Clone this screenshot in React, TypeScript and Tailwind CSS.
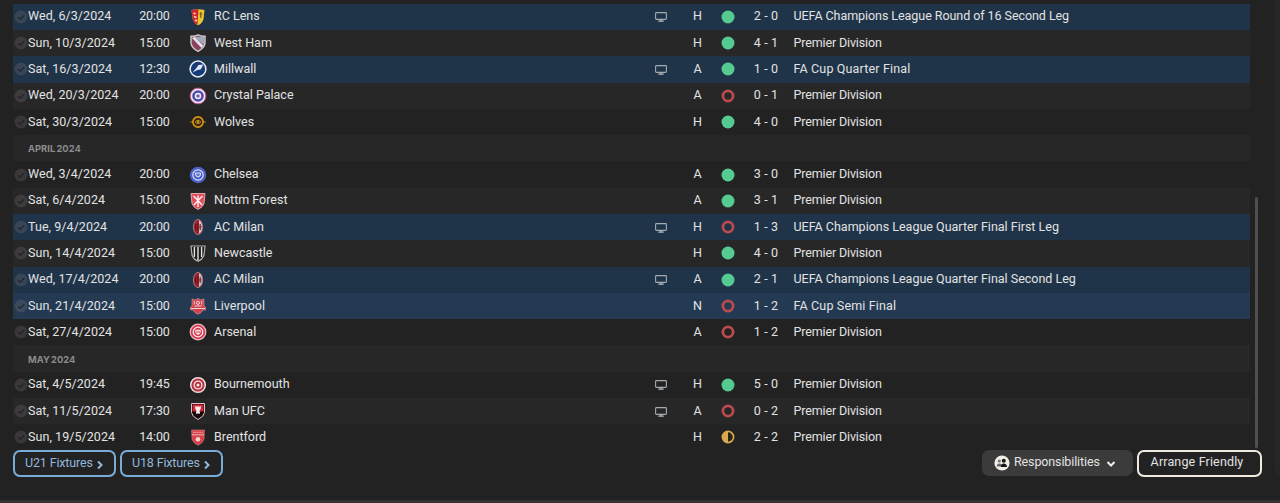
import type { ReactNode } from "react";
import clsx from "clsx";

type Result = "win" | "loss" | "draw";

interface Fixture {
  date: string;
  time: string;
  team: string;
  crest: string;
  tv?: boolean;
  venue: "H" | "A" | "N";
  result: Result;
  score: string;
  competition: string;
  cup?: boolean;
}

interface MonthRow {
  month: string;
}

const PREMIER = "Premier Division";
const UCL = "UEFA Champions League";

const rows: (Fixture | MonthRow)[] = [
  { date: "Wed, 6/3/2024", time: "20:00", team: "RC Lens", crest: "lens", tv: true, venue: "H", result: "win", score: "2 - 0", competition: `${UCL} Round of 16 Second Leg`, cup: true },
  { date: "Sun, 10/3/2024", time: "15:00", team: "West Ham", crest: "westham", venue: "H", result: "win", score: "4 - 1", competition: PREMIER },
  { date: "Sat, 16/3/2024", time: "12:30", team: "Millwall", crest: "millwall", tv: true, venue: "A", result: "win", score: "1 - 0", competition: "FA Cup Quarter Final", cup: true },
  { date: "Wed, 20/3/2024", time: "20:00", team: "Crystal Palace", crest: "palace", venue: "A", result: "loss", score: "0 - 1", competition: PREMIER },
  { date: "Sat, 30/3/2024", time: "15:00", team: "Wolves", crest: "wolves", venue: "H", result: "win", score: "4 - 0", competition: PREMIER },
  { month: "APRIL 2024" },
  { date: "Wed, 3/4/2024", time: "20:00", team: "Chelsea", crest: "chelsea", venue: "A", result: "win", score: "3 - 0", competition: PREMIER },
  { date: "Sat, 6/4/2024", time: "15:00", team: "Nottm Forest", crest: "forest", venue: "A", result: "win", score: "3 - 1", competition: PREMIER },
  { date: "Tue, 9/4/2024", time: "20:00", team: "AC Milan", crest: "milan", tv: true, venue: "H", result: "loss", score: "1 - 3", competition: `${UCL} Quarter Final First Leg`, cup: true },
  { date: "Sun, 14/4/2024", time: "15:00", team: "Newcastle", crest: "newcastle", venue: "H", result: "win", score: "4 - 0", competition: PREMIER },
  { date: "Wed, 17/4/2024", time: "20:00", team: "AC Milan", crest: "milan", tv: true, venue: "A", result: "win", score: "2 - 1", competition: `${UCL} Quarter Final Second Leg`, cup: true },
  { date: "Sun, 21/4/2024", time: "15:00", team: "Liverpool", crest: "liverpool", venue: "N", result: "loss", score: "1 - 2", competition: "FA Cup Semi Final", cup: true },
  { date: "Sat, 27/4/2024", time: "15:00", team: "Arsenal", crest: "arsenal", venue: "A", result: "loss", score: "1 - 2", competition: PREMIER },
  { month: "MAY 2024" },
  { date: "Sat, 4/5/2024", time: "19:45", team: "Bournemouth", crest: "bournemouth", tv: true, venue: "H", result: "win", score: "5 - 0", competition: PREMIER },
  { date: "Sat, 11/5/2024", time: "17:30", team: "Man UFC", crest: "manutd", tv: true, venue: "A", result: "loss", score: "0 - 2", competition: PREMIER },
  { date: "Sun, 19/5/2024", time: "14:00", team: "Brentford", crest: "brentford", venue: "H", result: "draw", score: "2 - 2", competition: PREMIER },
];

const SHIELD = "M2 2.2Q5.5 2.4 9 1Q12.500 2.4 16 2.200V9Q15.500 14 9 17.300Q2.500 14 2 9Z";

const crests: Record<string, ReactNode> = {
  lens: (
    <>
      <path d="M2.500 2Q9 .4 15.500 2L14.500 11Q13.500 15.500 9 17.300Q4.800 15.500 3.700 11Z" fill="#e9c62e" />
      <path d="M2.500 2Q6 1.200 9.500 1.200L8.500 17Q4.800 15.500 3.700 11Z" fill="#cf2530" />
      <path d="M4.500 5l2 1M5 8.500l2.500 1M6 12l2 1" stroke="#f5dfb5" strokeWidth="1.400" />
      <path d="M11.800 4v6M10.400 6h3" stroke="#6b5319" strokeWidth="1.100" />
    </>
  ),
  westham: (
    <>
      <path d={SHIELD} fill="#8c4059" stroke="#c9c5cf" strokeWidth="1.500" />
      <path d="M5 3h10v8z" fill="#a0a9b6" />
      <path d="M3 4l9.500 10 1.800-2.500L5.500 3z" fill="#dfe5ea" />
    </>
  ),
  millwall: (
    <>
      <circle cx="9" cy="9" r="7.900" fill="#173a78" stroke="#e8edf4" strokeWidth="1.500" />
      <path d="M3.500 12.500L7 8.500 9.500 5l4.500-.5-.8 2.500-1.700 2.500-3 .5z" fill="#dfe8f2" />
    </>
  ),
  palace: (
    <>
      <circle cx="9" cy="9" r="7.900" fill="#f0e8f4" stroke="#c04a8a" strokeWidth="1" />
      <circle cx="9" cy="9" r="5.800" fill="#4f4ba6" />
      <circle cx="9" cy="9" r="2.500" fill="#6c64b6" stroke="#f1edf8" strokeWidth="1.500" />
    </>
  ),
  wolves: (
    <>
      <circle cx="9" cy="9" r="7.500" fill="#282010" />
      <path d="M1 9h3M14 9h3" stroke="#a87921" />
      <circle cx="9" cy="9" r="5.100" fill="#38280d" stroke="#d3961e" strokeWidth="1.700" />
      <path d="M6.200 9Q9 5.500 11.800 9Q9 12.500 6.200 9Z" fill="#5d4014" stroke="#c28a20" />
      <circle cx="9" cy="9" r="1" fill="#dda62d" />
    </>
  ),
  chelsea: (
    <>
      <circle cx="9" cy="9" r="8.200" fill="#4c5fc5" />
      <circle cx="9" cy="9" r="5.200" fill="none" stroke="#dce3f8" strokeWidth="1.200" />
      <path d="M6.400 7h5.200l-.6 3Q9 12 7 10z" fill="#6578d2" stroke="#e2e8fb" />
    </>
  ),
  forest: (
    <>
      <path d="M2 1.500h14l-1 10Q14 15 9 17.500Q4 15 3 11.500Z" fill="#df4d5b" stroke="#efc7ca" strokeWidth=".8" />
      <path d="M9 3.500V15M4.500 4L9 8.500 13.500 4M5 13l4-4.500 4 4.500" fill="none" stroke="#fff0ee" strokeWidth="1.400" />
    </>
  ),
  milan: (
    <>
      <ellipse cx="9" cy="9" rx="4.600" ry="7.600" fill="#a41e2a" stroke="#b58a8d" strokeWidth=".8" />
      <path d="M10 2v14Q13.200 14 13.200 9T10 2z" fill="#cfc5c9" />
      <path d="M6.700 6v6.500M9 5v8M11.200 6v6" stroke="#4b151a" strokeWidth="1" />
      <path d="M9.800 9h3" stroke="#b52734" strokeWidth="1.500" />
    </>
  ),
  newcastle: (
    <>
      <path d="M2 2h14l-1 9Q13.500 15.500 9 17.200Q4.500 15.500 3 11Z" fill="#19191a" stroke="#b4b4ae" strokeWidth="1.200" />
      <path d="M5.400 3v10M9 3v13.500M12.600 3v10" stroke="#e7e7df" strokeWidth="1.400" />
    </>
  ),
  liverpool: (
    <>
      <path d="M3 2l3 1 3-1.500L12 3l3-1v7l1.500 1v3H14Q12.500 16 9 17.200Q5.500 16 4 13H1.500v-3L3 9z" fill="#cf4350" stroke="#e39ba0" strokeWidth=".6" />
      <path d="M2 11.500h14M5.500 9h7" stroke="#f3ced0" strokeWidth="1.200" />
      <circle cx="9" cy="5.800" r="1.600" fill="#d64b58" stroke="#f4d7d7" />
      <path d="M5.300 4v3.500M12.700 4v3.500" stroke="#f0c3c5" />
    </>
  ),
  arsenal: (
    <>
      <circle cx="9" cy="9" r="7.800" fill="#d63b50" stroke="#efb9c0" strokeWidth="1.200" />
      <circle cx="9" cy="9" r="4.800" fill="#d63b50" stroke="#f8e9eb" strokeWidth="1.300" />
      <path d="M6.200 6.800h5.600v2Q11.500 11 9 12Q6.500 11 6.200 8.800z" fill="#f4dfe1" />
      <path d="M7 9h4" stroke="#d63b50" />
    </>
  ),
  bournemouth: (
    <>
      <circle cx="9" cy="9" r="7.300" fill="#b92f40" stroke="#f0dfdd" strokeWidth="1.500" />
      <circle cx="9" cy="9" r="3.900" fill="#b92f40" stroke="#f0dfdd" strokeWidth="1.400" />
      <circle cx="9" cy="9" r="1.500" fill="#f7ece6" />
    </>
  ),
  manutd: (
    <>
      <path d="M2.500 1.500h13v9Q15 14.500 9 17.500Q3 14.500 2.500 10.500Z" fill="#15090b" stroke="#e2c0c1" />
      <path d="M3.500 2.500h11v7h-11z" fill="#d4293b" />
      <path d="M6.300 4h1.200v1h1V4h1.200v1h1V4h1v3l-1 1v3.500H7.300V8l-1-1z" fill="#f8eeee" />
      <path d="M4 10l5 4.500 5-4.500" fill="#15090b" />
      <path d="M7 10h4v1.700H7z" fill="#f1dede" />
    </>
  ),
  brentford: (
    <>
      <path d="M2.500 2h13l-.5 9Q14 15 9 17.300Q4 15 3 11Z" fill="#d7404a" stroke="#c98081" strokeWidth=".6" />
      <path d="M3 6.800h12" stroke="#f1b4b0" />
      <path d="M4 4.300h10" stroke="#ee9c9b" strokeWidth="1.300" strokeDasharray="1.200 .6" />
      <circle cx="9" cy="11.200" r="2.300" fill="#f7d6ca" />
    </>
  ),
};

function Crest({ name }: { name: string }) {
  return (
    <svg viewBox="0 0 18 18" className="size-[18px]">
      {crests[name]}
    </svg>
  );
}

function CheckIcon() {
  return (
    <svg viewBox="0 0 14 14" className="ml-[.5px] size-[14px]">
      <circle cx="7" cy="7" r="6.500" fill="#8b8580" fillOpacity=".22" />
      <path d="M4 7.200l2.200 2 4-4" fill="none" stroke="#161b20" strokeOpacity=".65" strokeWidth="1.400" />
    </svg>
  );
}

function TvIcon() {
  return (
    <svg viewBox="0 0 12 10" className="mt-px h-[10px] w-3">
      <rect x=".6" y=".6" width="10.800" height="6.800" rx=".8" fill="none" stroke="#a3aab0" strokeWidth="1.100" />
      <path d="M6 7.500v1.500M3.300 9.200h5.400" stroke="#b5bbc0" strokeWidth="1.300" />
    </svg>
  );
}

function ResultIcon({ result }: { result: Result }) {
  return (
    <svg viewBox="0 0 14 14" className="ml-[.5px] size-[14px]">
      {result === "win" && <circle cx="7" cy="7" r="6.500" fill="#55cb91" />}
      {result === "loss" && <circle cx="7" cy="7" r="5.100" fill="none" stroke="#b94a4e" strokeWidth="2.800" />}
      {result === "draw" && (
        <>
          <circle cx="7" cy="7" r="5.600" fill="#292419" stroke="#dba84b" strokeWidth="1.700" />
          <path d="M7 1.400a5.600 5.600 0 0 0 0 11.200z" fill="#dba84b" />
        </>
      )}
    </svg>
  );
}

function Chevron({ down }: { down?: boolean }) {
  return (
    <svg viewBox="0 0 10 10" className={clsx("mt-[2px] size-[10px]", down && "rotate-90")}>
      <path d="M3 1.500L6.500 5 3 8.500" fill="none" stroke="currentColor" strokeWidth="2" />
    </svg>
  );
}

function FixtureRow({ fixture, odd }: { fixture: Fixture; odd: boolean }) {
  const { competition } = fixture;
  return (
    <div
      className={clsx(
        "grid h-[26.29px] grid-cols-[15px_111px_31px_17px_27px_434px_26px_46px_14px_63px_1fr] items-center whitespace-nowrap",
        fixture.cup ? (odd ? "bg-[#243a52]" : "bg-[#203449]") : odd && "bg-[#272728]"
      )}
    >
      <CheckIcon />
      <span className="tracking-[0.06px]">{fixture.date}</span>
      <span className="text-center tracking-[-0.1px]">{fixture.time}</span>
      <span />
      <span className="pl-[2px]"><Crest name={fixture.crest} /></span>
      <span>{fixture.team}</span>
      <span className="flex justify-center">{fixture.tv && <TvIcon />}</span>
      <span className="pl-px text-center">{fixture.venue}</span>
      <ResultIcon result={fixture.result} />
      <span className="pl-px text-center tracking-[0.2px]">{fixture.score}</span>
      <span
        className={clsx(
          "-ml-[3.5px]",
          competition === PREMIER && "tracking-[-0.14px]",
          competition.startsWith("FA") && "tracking-[0.15px]",
          competition.includes("16") && "tracking-[-0.06px]"
        )}
      >
        {competition}
      </span>
    </div>
  );
}

export default function App() {
  return (
    <div className="flex h-[503px] w-[1280px] flex-col overflow-hidden bg-[#222223] font-[Roboto,sans-serif] text-[12.5px] text-[#e2e2e2]">
      <div className="flex h-[500px] justify-between">
        <div className="flex w-[1262px] flex-col">
          <div className="flex h-[450px]">
            <div className="ml-[13px] w-[1237px] pt-[3.7px]">
              {rows.map((row, i) =>
                "month" in row ? (
                  <div key={row.month} className="flex h-[26.29px] items-center bg-[#272728] pt-[2px] pl-[15px] font-[Inter,sans-serif] text-[9.3px] font-bold tracking-[0.05px] [word-spacing:-1px] text-[#8c8c8c]">
                    {row.month}
                  </div>
                ) : (
                  <FixtureRow key={row.date} fixture={row} odd={i % 2 === 1} />
                )
              )}
            </div>
            <div className="mt-[197px] ml-[5px] h-[251px] w-[3px] rounded-full bg-[#4f4f50]" />
          </div>
          <div className="flex pl-[13px]">
            {["U21 Fixtures", "U18 Fixtures"].map((label) => (
              <button key={label} className="mr-1 flex h-[27px] w-[103px] items-center gap-[2px] rounded-[7px] border-2 border-[#79add8] pl-[10px] tracking-[-0.15px] text-[#90b9dc]">
                <span className="-mt-px">{label}</span>
                <Chevron />
              </button>
            ))}
            <button className="ml-auto flex h-[26px] w-[151px] items-center rounded-[7px] bg-[#3b3b3b] pl-[12px]">
              <svg viewBox="0 0 16 16" className="mr-[4px] size-4">
                <circle cx="8" cy="8" r="7.600" fill="#f2ede5" />
                <circle cx="5.300" cy="6" r="1.600" fill="#777" />
                <circle cx="9.800" cy="5.800" r="2" fill="#161616" />
                <path d="M2.800 11.500q0-3 2.600-3t2.800 3z" fill="#666" />
                <path d="M6.800 12q0-3.500 3-3.500t3.200 3.500z" fill="#161616" />
              </svg>
              <span className="-mt-[2px] tracking-[-0.12px]">Responsibilities</span>
              <span className="ml-[6px] text-[#f2ede5]"><Chevron down /></span>
            </button>
            <button className="ml-1 h-[27px] w-[125px] rounded-[7px] border-2 border-[#efe9de] pr-[5px] pb-[3px] tracking-[0.15px]">Arrange Friendly</button>
          </div>
        </div>
        <div className="h-[476px] w-[5px] rounded-bl-[6px] bg-[#262627]" />
      </div>
      <div className="h-[3px] bg-[#363233]" />
    </div>
  );
}
